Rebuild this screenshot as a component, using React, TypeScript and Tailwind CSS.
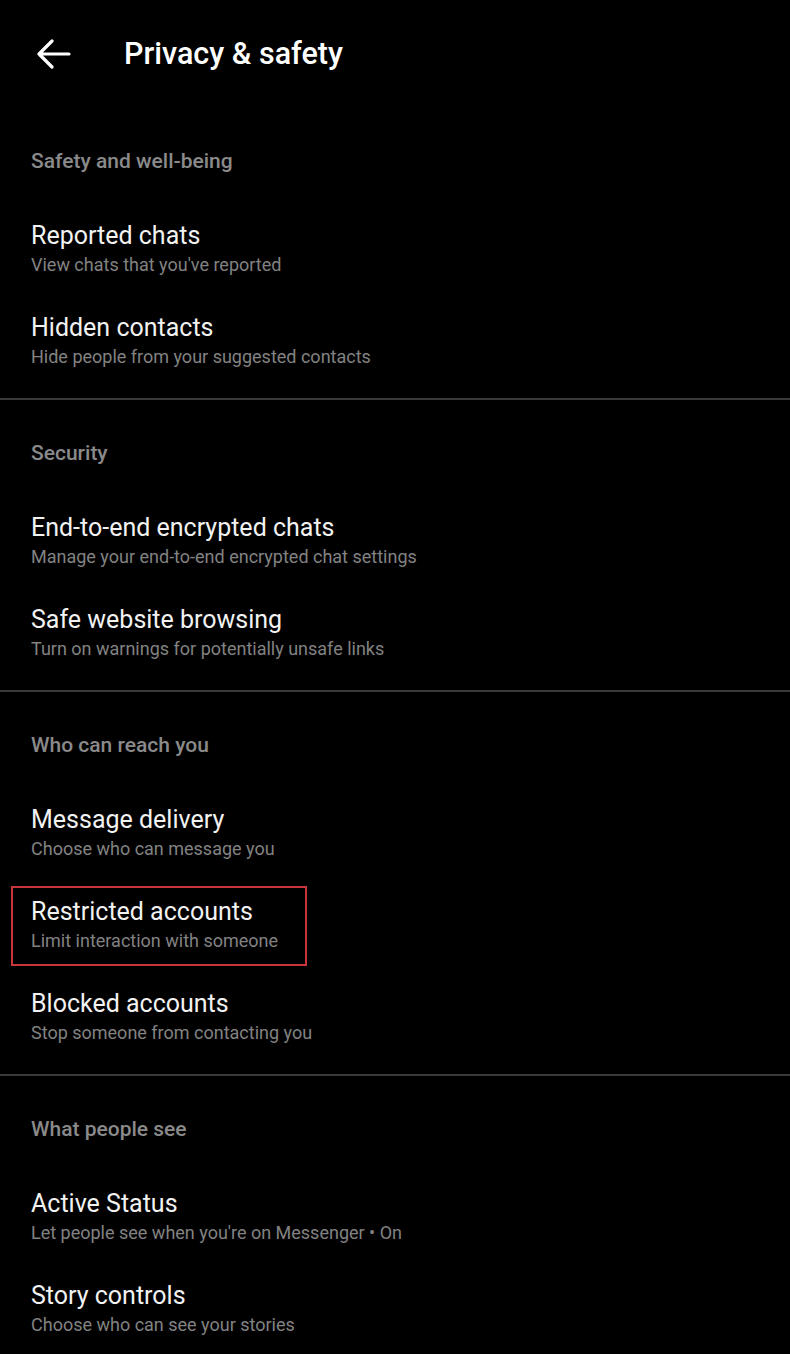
import React from 'react';

interface Item {
  title: string;
  subtitle: string;
  highlight?: boolean;
}

interface Section {
  heading: string;
  items: Item[];
}

const sections: Section[] = [
  {
    heading: 'Safety and well-being',
    items: [
      { title: 'Reported chats', subtitle: "View chats that you've reported" },
      { title: 'Hidden contacts', subtitle: 'Hide people from your suggested contacts' },
    ],
  },
  {
    heading: 'Security',
    items: [
      { title: 'End-to-end encrypted chats', subtitle: 'Manage your end-to-end encrypted chat settings' },
      { title: 'Safe website browsing', subtitle: 'Turn on warnings for potentially unsafe links' },
    ],
  },
  {
    heading: 'Who can reach you',
    items: [
      { title: 'Message delivery', subtitle: 'Choose who can message you' },
      { title: 'Restricted accounts', subtitle: 'Limit interaction with someone', highlight: true },
      { title: 'Blocked accounts', subtitle: 'Stop someone from contacting you' },
    ],
  },
  {
    heading: 'What people see',
    items: [
      { title: 'Active Status', subtitle: "Let people see when you're on Messenger • On" },
      { title: 'Story controls', subtitle: 'Choose who can see your stories' },
    ],
  },
];

const BackArrow = () => (
  <svg width="36" height="30" viewBox="0 0 36 30" fill="none">
    <path d="M3 15h30M16 2L3 15l13 13" stroke="#fff" strokeWidth="3.2" strokeLinecap="round" strokeLinejoin="round" />
  </svg>
);

const Row: React.FC<{ item: Item }> = ({ item }) => (
  <div className="relative h-[92px] pt-[18px] px-[31px]">
    <div className="text-[25px] leading-[30px] text-[#f2f2f2]">{item.title}</div>
    <div className="text-[18px] leading-[28px] text-[#828282]">{item.subtitle}</div>
    {item.highlight && (
      <div className="absolute left-[11px] top-[7px] w-[296px] h-[80px] border-2 border-[#c8363b]" />
    )}
  </div>
);

export default function App() {
  return (
    <div className="min-h-screen w-full bg-black overflow-hidden" style={{ fontFamily: 'Roboto, "Noto Sans", sans-serif' }}>
      <header className="h-[108px] flex items-center">
        <button className="ml-[36px] w-[36px] flex items-center justify-center">
          <BackArrow />
        </button>
        <h1 className="ml-[52px] text-[30.5px] font-medium text-white">Privacy &amp; safety</h1>
      </header>

      {sections.map((section, i) => (
        <section key={section.heading}>
          {i > 0 && <div className="h-[2px] bg-[#3a3a3a]" />}
          <div className="pt-[39px] pb-[11px]">
            <div className="h-[28px] mb-[28px] px-[31px] text-[21px] leading-[28px] font-medium text-[#8a8a8a]">
              {section.heading}
            </div>
            {section.items.map((item) => (
              <Row key={item.title} item={item} />
            ))}
          </div>
        </section>
      ))}
    </div>
  );
}
